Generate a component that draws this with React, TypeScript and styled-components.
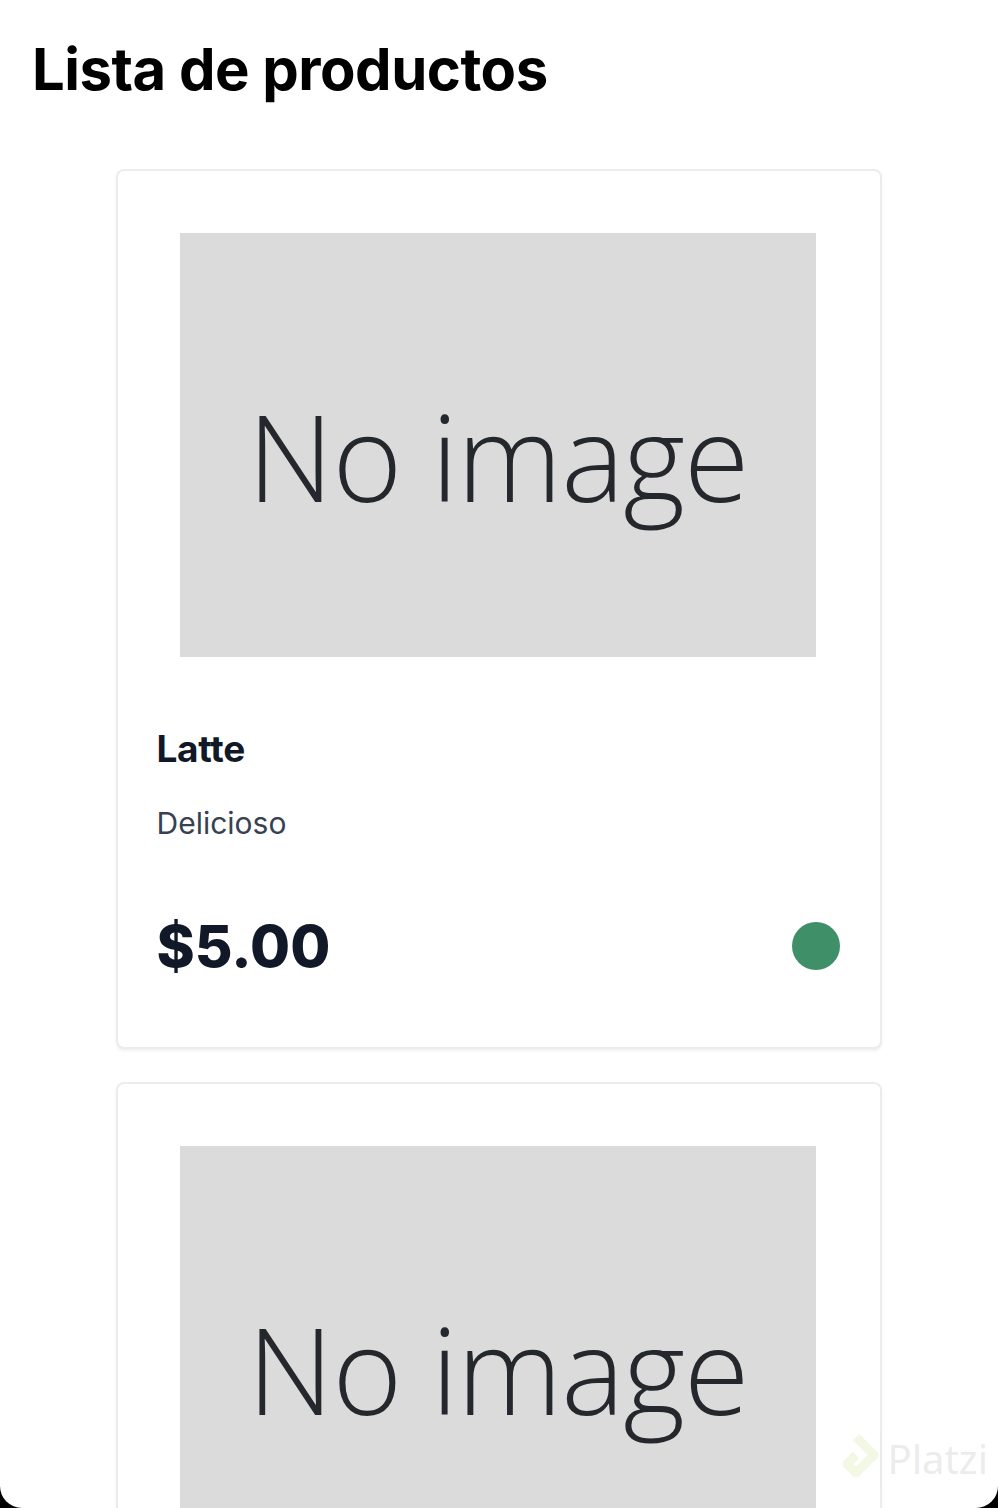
import React from "react";
import styled, { createGlobalStyle } from "styled-components";

const Global = createGlobalStyle`
  html, body { margin: 0; padding: 0; background: #000; }
  body { font-family: Inter, "Noto Sans", sans-serif; }
`;

const Screen = styled.div`
  position: relative;
  background: #fff;
  height: 1508px;
  overflow: hidden;
  border-radius: 0 0 22px 22px;
  padding: 0 32px;
  box-sizing: border-box;
`;

const Title = styled.h1`
  margin: 0;
  padding-top: 34px;
  font-family: Inter, "Liberation Sans", sans-serif;
  font-weight: 700;
  font-size: 58px;
  line-height: 70px;
  color: #000;
  letter-spacing: -0.5px;
`;

const List = styled.div`
  display: flex;
  flex-direction: column;
  align-items: center;
  gap: 33px;
  margin-top: 65px;
`;

const Card = styled.div`
  width: 766px;
  box-sizing: border-box;
  background: #fff;
  border: 2px solid #ececec;
  border-radius: 8px;
  box-shadow: 0 2px 3px rgba(0, 0, 0, 0.06);
  padding: 62px 40px 61px 39px;
  margin-left: -1px;
`;

const ImageBox = styled.div`
  width: 636px;
  height: 424px;
  margin: 0 auto;
  background: #dbdbdb;
  display: flex;
  align-items: center;
  justify-content: center;
`;

const ImageText = styled.span`
  font-family: "Open Sans", sans-serif;
  font-weight: 300;
  font-size: 119px;
  line-height: 1.2;
  color: #24272c;
  margin-top: 22px;
  letter-spacing: -1px;
`;

const Name = styled.h2`
  margin: 68px 0 0 0;
  font-weight: 700;
  font-size: 37px;
  line-height: 48px;
  color: #111827;
  letter-spacing: -0.3px;
`;

const Desc = styled.p`
  margin: 30px 0 0 0;
  font-size: 30px;
  line-height: 40px;
  color: #374151;
`;

const Footer = styled.div`
  display: flex;
  align-items: center;
  justify-content: space-between;
  margin-top: 63px;
`;

const Price = styled.span`
  font-weight: 800;
  font-size: 58px;
  line-height: 80px;
  color: #111827;
`;

const Dot = styled.span<{ $color: string }>`
  width: 48px;
  height: 48px;
  border-radius: 50%;
  background: ${(p) => p.$color};
`;

const Watermark = styled.div`
  position: absolute;
  right: 10px;
  bottom: 22px;
  display: flex;
  align-items: center;
  gap: 8px;
  opacity: 0.35;
`;

const WatermarkText = styled.span`
  font-family: "Noto Sans", sans-serif;
  font-size: 40px;
  color: #c8c8c8;
`;

const products = [
  { name: "Latte", desc: "Delicioso", price: "$5.00", color: "#3f9068" },
  { name: "Latte", desc: "Delicioso", price: "$5.00", color: "#3f9068" },
];

export default function App() {
  return (
    <>
      <Global />
      <Screen>
        <Title>Lista de productos</Title>
        <List>
          {products.map((p, i) => (
            <Card key={i}>
              <ImageBox>
                <ImageText>No image</ImageText>
              </ImageBox>
              <Name>{p.name}</Name>
              <Desc>{p.desc}</Desc>
              <Footer>
                <Price>{p.price}</Price>
                <Dot $color={p.color} />
              </Footer>
            </Card>
          ))}
        </List>
        <Watermark>
          <svg width="46" height="50" viewBox="0 0 46 50">
            <path
              d="M23 3 L41 21 L23 39 L14 30 L23 21"
              fill="none"
              stroke="#d9ecb0"
              strokeWidth="9"
              strokeLinejoin="round"
            />
          </svg>
          <WatermarkText>Platzi</WatermarkText>
        </Watermark>
      </Screen>
    </>
  );
}
